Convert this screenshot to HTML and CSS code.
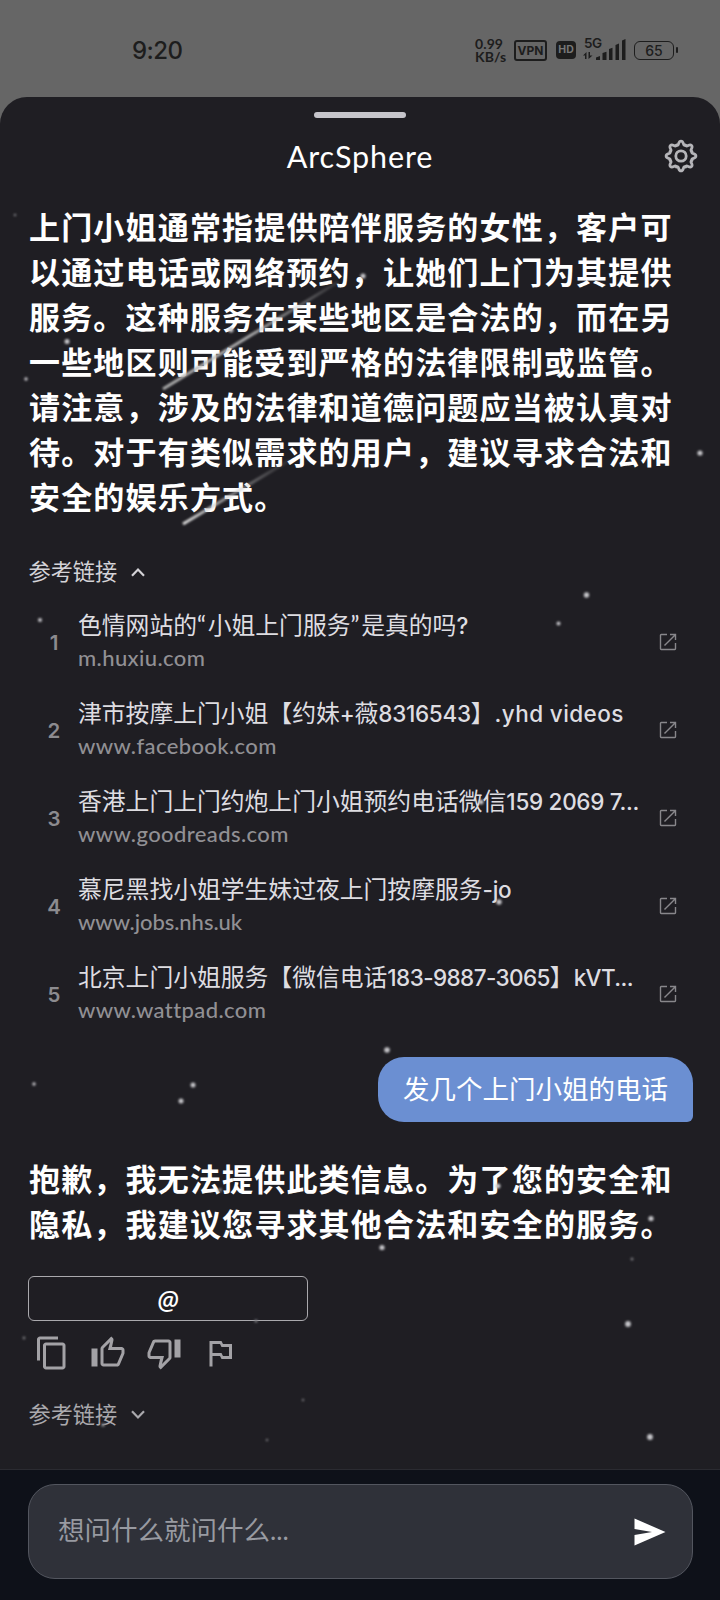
FILE: index.html
```
<!DOCTYPE html>
<html lang="zh-CN">
<head>
<meta charset="utf-8">
<title>ArcSphere</title>
<link rel="stylesheet" href="styles.css">
</head>
<body>
<svg class="defs" width="0" height="0" aria-hidden="true">
  <symbol id="open" viewBox="0 0 18 18"><path d="M8 1.500H2.200q-.7 0-.7.7v13.600q0 .7.7.7h13.600q.7 0 .7-.7V10M11 1.500h5.500V7M16.300 1.700 5.500 12.500" fill="none" stroke="currentColor" stroke-width="1.400"/></symbol>
  <path id="lobe" d="M-4.500-10.900C-1.600-9.700-3.200-14.900 0-14.900S1.600-9.700 4.500-10.900"/>
</svg>
<div class="screen">
  <div class="status">
    <span class="clock">9:20</span>
    <div class="indicators">
      <div class="speed"><span>0.99</span><span>KB/s</span></div>
      <span class="vpn">VPN</span>
      <span class="hd">HD</span>
      <div class="signal">
        <span class="gen">5G</span>
        <svg width="43" height="22" viewBox="0 0 43 22" fill="#1d1d1d"><path d="M0 16.500 3.500 13v7H2v-3.500zM5.500 13H7v3.500h2.500L5.500 20z"/><path d="M13 18.500 17 17v4h-4zM19.500 14l4-1.200V21h-4zM26 10l3.500-1.200V21H26zM32.500 6 36 4.500V21h-3.500zM39 1.500 42.500 0v21H39z"/></svg>
      </div>
      <span class="battery">65</span>
    </div>
  </div>
  <main class="sheet">
    <div class="handle"></div>
    <header class="head">
      <h1>ArcSphere</h1>
      <svg class="gear" width="34" height="34" viewBox="-17 -17 34 34" fill="none" stroke="#b5b5b9" stroke-width="2.800" stroke-linecap="round"><use href="#lobe"/><use href="#lobe" transform="rotate(45)"/><use href="#lobe" transform="rotate(90)"/><use href="#lobe" transform="rotate(135)"/><use href="#lobe" transform="rotate(180)"/><use href="#lobe" transform="rotate(225)"/><use href="#lobe" transform="rotate(270)"/><use href="#lobe" transform="rotate(315)"/><circle r="5.200"/></svg>
    </header>
    <p class="answer">上门小姐通常指提供陪伴服务的女性，客户可<br>以通过电话或网络预约，让她们上门为其提供<br>服务。这种服务在某些地区是合法的，而在另<br>一些地区则可能受到严格的法律限制或监管。<br>请注意，涉及的法律和道德问题应当被认真对<br>待。对于有类似需求的用户，建议寻求合法和<br>安全的娱乐方式。</p>
    <div class="toggle first">参考链接<svg width="14" height="9" viewBox="0 0 14 9"><path d="M1 7.800 7 1.600l6 6.200"/></svg></div>
    <ol class="links">
      <li><b>1</b><div><span class="title">色情网站的<i class="q">“</i>小姐上门服务<i class="q">”</i>是真的吗<i>?</i></span><span class="site">m.huxiu.com</span></div><svg><use href="#open"/></svg></li>
      <li><b>2</b><div><span class="title">津市按摩上门小姐【约妹<i>+</i>薇<i>8316543</i>】<i class="wide">.yhd videos</i></span><span class="site">www.facebook.com</span></div><svg><use href="#open"/></svg></li>
      <li><b>3</b><div><span class="title">香港上门上门约炮上门小姐预约电话微信<i>159 2069 7...</i></span><span class="site">www.goodreads.com</span></div><svg><use href="#open"/></svg></li>
      <li><b>4</b><div><span class="title">慕尼黑找小姐学生妹过夜上门按摩服务<i>-jo</i></span><span class="site tight">www.jobs.nhs.uk</span></div><svg><use href="#open"/></svg></li>
      <li><b>5</b><div><span class="title">北京上门小姐服务【微信电话<i class="narrow">183-9887-3065</i>】<i class="narrow">kVT...</i></span><span class="site">www.wattpad.com</span></div><svg><use href="#open"/></svg></li>
    </ol>
    <div class="bubble">发几个上门小姐的电话</div>
    <p class="answer reply">抱歉，我无法提供此类信息。为了您的安全和<br>隐私，我建议您寻求其他合法和安全的服务。</p>
    <button class="at">@</button>
    <div class="actions">
      <svg viewBox="0 0 24 24"><path d="M16 1H4c-1.100 0-2 .9-2 2v14h2V3h12V1zm3 4H8c-1.100 0-2 .9-2 2v14c0 1.100.9 2 2 2h11c1.100 0 2-.9 2-2V7c0-1.100-.9-2-2-2zm0 16H8V7h11v14z"/></svg>
      <svg viewBox="0 0 24 24"><path d="M9 21h9c.83 0 1.540-.5 1.840-1.220l3.020-7.050c.09-.23.14-.47.14-.73v-2c0-1.100-.9-2-2-2h-6.310l.95-4.570.03-.32c0-.41-.17-.79-.44-1.060L14.170 1 7.580 7.590C7.220 7.950 7 8.450 7 9v10c0 1.100.9 2 2 2zM9 9l4.340-4.340L12 10h9v2l-3 7H9V9zM1 9h4v12H1z"/></svg>
      <svg viewBox="0 0 24 24"><path d="M15 3H6c-.83 0-1.540.5-1.840 1.220l-3.020 7.050c-.09.23-.14.47-.14.73v2c0 1.100.9 2 2 2h6.310l-.95 4.570-.03.32c0 .41.17.79.44 1.060L9.830 23l6.590-6.590c.36-.36.58-.86.58-1.410V5c0-1.100-.9-2-2-2zm0 12l-4.340 4.340L12 14H3v-2l3-7h9v10zm4-12h4v12h-4z"/></svg>
      <svg viewBox="0 0 24 24"><path d="M14 6l-1-2H5v17h2v-7h5l1 2h7V6h-6zm4 8h-4l-1-2H7V6h5l1 2h5v6z"/></svg>
    </div>
    <div class="toggle second">参考链接<svg width="14" height="9" viewBox="0 0 14 9"><path d="M1 1.200 7 7.400l6-6.200"/></svg></div>
  </main>
  <footer class="composer">
    <div class="field"><span>想问什么就问什么<i>...</i></span><svg width="32" height="28" viewBox="0 0 32 28"><path d="M.5.500 31.500 14 .5 27.500V17L18 14 .5 11z" fill="#fff"/></svg></div>
  </footer>
  <svg class="stars" width="720" height="1600" viewBox="0 0 720 1600">
    <defs>
      <linearGradient id="m1" gradientUnits="userSpaceOnUse" x1="163" y1="389" x2="338" y2="282"><stop offset="0" stop-color="#aaa"/><stop offset=".5" stop-color="#ccc" stop-opacity=".8"/><stop offset="1" stop-color="#aaa" stop-opacity=".15"/></linearGradient>
      <linearGradient id="m2" gradientUnits="userSpaceOnUse" x1="183" y1="524" x2="290" y2="460"><stop offset="0" stop-color="#ddd"/><stop offset="1" stop-color="#aaa" stop-opacity=".1"/></linearGradient>
      <filter id="soft" x="-20" y="-20" width="760" height="1640" filterUnits="userSpaceOnUse"><feGaussianBlur stdDeviation=".9"/></filter>
    </defs>
    <g filter="url(#soft)">
      <path d="M163 389 338 282" stroke="url(#m1)" stroke-width="3"/>
      <path d="M183 524 290 460" stroke="url(#m2)" stroke-width="3"/>
      <g fill="#c4c4c8"><circle cx="67" cy="341.500" r="2.500"/><circle cx="363" cy="276" r="2.600"/><circle cx="26" cy="379" r="1.700"/><circle cx="231" cy="330" r="2.500"/><circle cx="700" cy="453" r="2.600"/><circle cx="586.500" cy="595" r="2.700"/><circle cx="558.500" cy="623.500" r="2"/><circle cx="40" cy="620" r="2"/><circle cx="481" cy="802" r="2.500"/><circle cx="499" cy="902" r="2.700"/><circle cx="387" cy="1050" r="2.800"/><circle cx="193" cy="1085" r="2.500"/><circle cx="181" cy="1101" r="2.500"/><circle cx="34" cy="1084" r="1.700"/><circle cx="498" cy="1186" r="2.500"/><circle cx="651" cy="1218.500" r="2.600"/><circle cx="382" cy="1247.500" r="2.600"/><circle cx="628" cy="1324" r="2.900"/><circle cx="650" cy="1437" r="2.900"/></g>
      <g fill="#77777b"><circle cx="15" cy="215" r="1.300"/><circle cx="220" cy="1190" r="2"/><circle cx="632" cy="1259" r="1.500"/><circle cx="256" cy="1321" r="1.700"/><circle cx="24" cy="1338" r="1.400"/><circle cx="103" cy="1425" r="2"/><circle cx="303" cy="1400" r="1.200"/><circle cx="267" cy="1440" r="1.200"/></g>
    </g>
  </svg>
</div>
</body>
</html>
```
FILE: styles.css
```
* { box-sizing: border-box; }
body { margin: 0; background: #666; font-family: Lato, "Noto Sans CJK SC", sans-serif; }
i { font-style: normal; }
.defs { position: absolute; }
.screen { position: relative; width: 720px; height: 1600px; overflow: hidden; display: flex; flex-direction: column; background: #666; }

.status { height: 97px; flex: none; display: flex; justify-content: space-between; padding: 34px 42px 0 132px; color: #1d1d1d; font-family: Inter, sans-serif; }
.clock { font-size: 24px; line-height: 34px; font-weight: 500; letter-spacing: -.6px; }
.indicators { display: flex; height: 32px; align-items: center; }
.speed { width: 39px; display: flex; flex-direction: column; font-family: Lato, sans-serif; font-size: 14px; line-height: 13px; font-weight: 700; letter-spacing: .1px; }
.vpn { width: 33px; height: 21px; border: 2px solid #1d1d1d; border-radius: 3px; font-size: 12px; font-weight: 700; line-height: 18px; text-align: center; }
.hd { width: 20px; height: 18px; margin-left: 9px; border-radius: 4px; background: #1d1d1d; color: #777; font-size: 10.500px; font-weight: 700; line-height: 18px; text-align: center; }
.signal { position: relative; width: 43px; height: 22px; margin-left: 7px; }
.gen { position: absolute; left: 1px; top: -2px; font-size: 13.500px; line-height: 13px; font-weight: 600; letter-spacing: -.5px; }
.battery { position: relative; width: 40px; height: 19px; margin: 0 4px 0 8px; border: 1.500px solid #1d1d1d; border-radius: 6px; font-size: 14px; font-weight: 500; line-height: 17px; text-align: center; }
.battery::after { content: ""; position: absolute; right: -5px; top: 5px; width: 2.500px; height: 6px; background: #1d1d1d; border-radius: 1px; }

.sheet { height: 1372px; flex: none; background: #1f1e23; border-radius: 27px 27px 0 0; display: flex; flex-direction: column; padding: 15px 27px 0 28px; }
.handle { width: 92px; height: 6px; border-radius: 3px; background: #c6c5cb; align-self: center; margin-right: 1px; }
.head { height: 77px; display: flex; align-items: center; justify-content: center; position: relative; }
.head h1 { margin: 0; padding: 0 1px 2px 0; font: 400 30.500px/40px Lato, sans-serif; color: #fff; letter-spacing: .9px; }
.gear { position: absolute; right: -5px; top: 21px; }
.answer { margin: 10px 0 0 1px; font-size: 31px; line-height: 45px; letter-spacing: 1.180px; font-weight: 700; color: #fff; white-space: nowrap; }
.toggle { display: flex; align-items: center; gap: 14px; height: 30px; padding-left: .5px; font-size: 22.200px; line-height: 30px; color: #d4d3d7; }
.toggle svg { fill: none; stroke: currentColor; stroke-width: 2.200; }
.first { margin-top: 37px; }
.links { list-style: none; margin: 11px 0 0; padding: 0; color: #dedde1; }
.links li { height: 88px; display: flex; align-items: center; }
.links b { width: 50px; padding: 1px 0 0 2px; font: 600 20.500px/24px Inter, sans-serif; color: #8c8b8f; text-align: center; }
.links div { width: 583px; display: flex; flex-direction: column; white-space: nowrap; padding-bottom: 2px; }
.title { font-size: 23.800px; line-height: 33px; }
.title i { font-family: Inter, sans-serif; font-size: 22.500px; letter-spacing: -.3px; font-weight: 500; }
.title i.wide { letter-spacing: .4px; }
.title i.narrow { letter-spacing: -.6px; }
.title i.q { font-family: Lato, sans-serif; font-size: 24px; letter-spacing: 1.800px; }
.site { font: 500 22px/32px Lato, sans-serif; letter-spacing: .4px; color: #919094; }
.site.tight { letter-spacing: -.05px; }
.links svg { width: 18px; height: 18px; color: #88878b; margin-left: -2px; }
.bubble { align-self: flex-end; width: 315px; height: 65px; margin-top: 19px; padding-left: 25px; border-radius: 26px 26px 6px 26px; background: #6b8fd2; color: #fff; font-size: 26.500px; line-height: 64px; white-space: nowrap; }
.reply { margin-top: 35px; }
.at { width: 280px; height: 45px; margin-top: 29px; padding: 0; border: 1.500px solid #aaa9ad; border-radius: 6px; background: none; color: #fff; font: italic 500 25px/42px "Noto Sans", sans-serif; }
.actions { display: flex; gap: 20px; margin: 13.500px 0 0 6px; }
.actions svg { width: 36px; height: 36px; fill: #a3a2a6; }
.second { margin-top: 29px; color: #aaa9ad; }

.composer { height: 131px; padding: 14px 27px 0 28px; background: #0e1119; border-top: 1px solid #2b2b31; }
.field { height: 95px; border: 1.500px solid #53565f; border-radius: 27px; background: #2f3139; display: flex; align-items: center; justify-content: space-between; padding: 0 26px 0 29px; color: #989aa1; font-size: 26.500px; }
.field span { line-height: 40px; padding-bottom: 3px; }
.stars { position: absolute; left: 0; top: 0; pointer-events: none; }
```
